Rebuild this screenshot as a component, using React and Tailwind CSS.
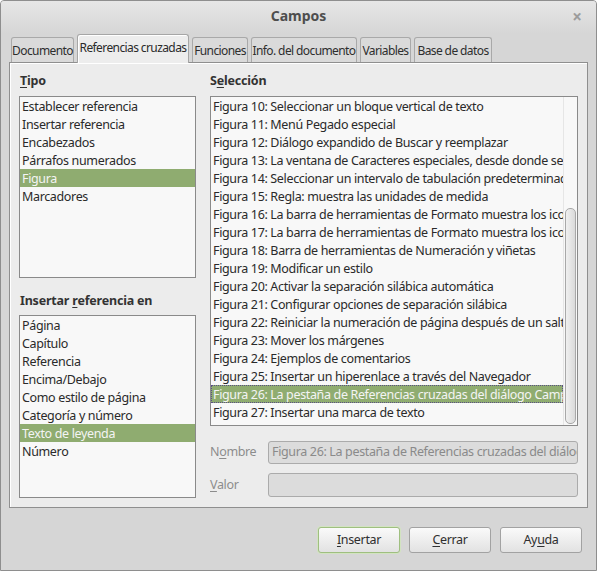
import React from 'react';

const font = { fontFamily: '"Noto Sans", "Open Sans", sans-serif' };

const tabs = [
  { label: 'Documento', w: 'w-[63px]' },
  { label: 'Referencias cruzadas', w: 'w-[112px]', active: true },
  { label: 'Funciones', w: 'w-[56px]' },
  { label: 'Info. del documento', w: 'w-[106px]' },
  { label: 'Variables', w: 'w-[51px]' },
  { label: 'Base de datos', w: 'w-[78px]' },
];

const tipos = [
  'Establecer referencia',
  'Insertar referencia',
  'Encabezados',
  'Párrafos numerados',
  'Figura',
  'Marcadores',
];

const insertarEn = [
  'Página',
  'Capítulo',
  'Referencia',
  'Encima/Debajo',
  'Como estilo de página',
  'Categoría y número',
  'Texto de leyenda',
  'Número',
];

const figuras = [
  'Figura 10: Seleccionar un bloque vertical de texto',
  'Figura 11: Menú Pegado especial',
  'Figura 12: Diálogo expandido de Buscar y reemplazar',
  'Figura 13: La ventana de Caracteres especiales, desde donde se pueden insertar',
  'Figura 14: Seleccionar un intervalo de tabulación predeterminado',
  'Figura 15: Regla: muestra las unidades de medida',
  'Figura 16: La barra de herramientas de Formato muestra los iconos',
  'Figura 17: La barra de herramientas de Formato muestra los iconos',
  'Figura 18: Barra de herramientas de Numeración y viñetas',
  'Figura 19: Modificar un estilo',
  'Figura 20: Activar la separación silábica automática',
  'Figura 21: Configurar opciones de separación silábica',
  'Figura 22: Reiniciar la numeración de página después de un salto',
  'Figura 23: Mover los márgenes',
  'Figura 24: Ejemplos de comentarios',
  'Figura 25: Insertar un hiperenlace a través del Navegador',
  'Figura 26: La pestaña de Referencias cruzadas del diálogo Campos',
  'Figura 27: Insertar una marca de texto',
];

const ListRow = ({ text, selected, focused }) => (
  <div
    className={
      'h-[18px] leading-[16px] pt-[1px] pl-[1px] whitespace-nowrap border ' +
      (selected ? 'bg-[#8fac70] text-[#f4f4f4] ' : 'text-[#2a2a2a] ') +
      (focused ? 'border-dotted border-[#5a4f86]' : 'border-transparent')
    }
  >
    {text}
  </div>
);

const Button = ({ children, primary }) => (
  <button
    className={
      'w-[82px] h-[26px] rounded-[3px] border bg-gradient-to-b from-[#fafafa] to-[#e2e2e2] text-[#2f2f2f] text-[12.5px] tracking-[-0.35px] ' +
      (primary ? 'border-[#9fbf80] shadow-[0_0_0_1px_#d2e3c1]' : 'border-[#a2a2a2]')
    }
    style={font}
  >
    {children}
  </button>
);

export default function App() {
  return (
    <div
      className="w-[597px] h-[571px] bg-[#d6d6d6] border border-[#8e8e8e] rounded-t-[4px] flex flex-col overflow-hidden text-[12.5px] tracking-[-0.35px]"
      style={font}
    >
      {/* Title bar */}
      <div className="bg-gradient-to-b from-[#e6e6e6] to-[#d6d6d6]">
        <div className="h-[33px] flex items-center justify-center relative">
          <span className="text-[14px] font-bold text-[#4e4e4e] tracking-normal -mt-[5px]">Campos</span>
          <span className="absolute right-[14px] top-[3px] text-[#9c9c9c] text-[17px] font-bold tracking-normal">×</span>
        </div>
      </div>

      {/* Tabs */}
      <div className="flex items-end gap-[3px] pl-[10px] h-[29px] -mb-px relative z-10 text-[12px] tracking-[-0.6px]">
        {tabs.map((t) =>
          t.active ? (
            <div
              key={t.label}
              className={t.w + ' shrink-0 h-[29px] bg-[#ededed] border border-b-0 border-[#a6a6a6] rounded-t-[3px] flex items-center justify-center whitespace-nowrap text-[#2a2a2a] pb-[2px] shadow-[inset_1px_1px_0_#ffffff]'}
            >
              {t.label}
            </div>
          ) : (
            <div
              key={t.label}
              className={t.w + ' shrink-0 h-[25px] mb-px bg-[#dadada] border border-b-0 border-[#a9a9a9] rounded-t-[3px] flex items-center justify-center whitespace-nowrap text-[#2e2e2e] pt-[1px]'}
            >
              {t.label}
            </div>
          )
        )}
      </div>

      {/* Panel */}
      <div className="ml-[8px] w-[579px] h-[446px] bg-[#ececec] border border-[#8f8f8f] shadow-[inset_1px_1px_0_#ffffff] flex gap-[14px] pl-[9px] pt-[9px]">
        {/* Left column */}
        <div className="w-[177px] flex flex-col">
          <div className="h-[18px] leading-[18px] font-bold text-[#333] pl-[1px] tracking-[-0.2px]">
            <u className="underline-offset-2">T</u>ipo
          </div>
          <div className="mt-[6px] h-[182px] bg-[#f8f8f8] border border-[#8a8a8a] overflow-hidden">
            {tipos.map((t, i) => (
              <ListRow key={t} text={t} selected={i === 4} />
            ))}
          </div>
          <div className="mt-[14px] h-[18px] leading-[18px] font-bold text-[#333] pl-[1px] tracking-[-0.2px]">
            Insertar <u className="underline-offset-2">r</u>eferencia en
          </div>
          <div className="mt-[5px] h-[183px] bg-[#f8f8f8] border border-[#8a8a8a] overflow-hidden">
            {insertarEn.map((t, i) => (
              <ListRow key={t} text={t} selected={i === 6} />
            ))}
          </div>
        </div>

        {/* Right column */}
        <div className="w-[368px] flex flex-col">
          <div className="h-[18px] leading-[18px] font-bold text-[#333] tracking-[-0.2px]">
            S<u className="underline-offset-2">e</u>lección
          </div>
          <div className="mt-[6px] h-[330px] bg-[#f8f8f8] border border-[#8a8a8a] flex">
            <div className="flex-1 min-w-0 overflow-hidden">
              {figuras.map((t, i) => (
                <ListRow key={t} text={t} selected={i === 16} focused={i === 16} />
              ))}
            </div>
            <div className="w-[14px] flex flex-col justify-end items-center pb-[1px] border-l border-[#e6e6e6]">
              <div className="w-[11px] h-[216px] rounded-[5px] border border-[#a8a8a8] bg-gradient-to-r from-[#f0f0f0] to-[#dadada]" />
            </div>
          </div>

          <div className="mt-[15px] flex items-center">
            <span className="w-[58px] text-[#8c8c8c]">
              N<u className="underline-offset-2">o</u>mbre
            </span>
            <div className="flex-1 h-[23px] rounded-[3px] border border-[#ababab] bg-[#dcdcdc] flex items-center pl-[3px] text-[#8a8a8a] whitespace-nowrap overflow-hidden">
              Figura 26: La pestaña de Referencias cruzadas del diálogo Campos
            </div>
          </div>
          <div className="mt-[9px] flex items-center">
            <span className="w-[58px] text-[#8c8c8c]">
              <u className="underline-offset-2">V</u>alor
            </span>
            <div className="flex-1 h-[24px] rounded-[3px] border border-[#ababab] bg-[#dcdcdc]" />
          </div>
        </div>
      </div>

      {/* Buttons */}
      <div className="flex justify-end gap-[9px] pr-[14px] mt-[19px]">
        <Button primary>
          <u className="underline-offset-2">I</u>nsertar
        </Button>
        <Button>
          <u className="underline-offset-2">C</u>errar
        </Button>
        <Button>
          Ay<u className="underline-offset-2">u</u>da
        </Button>
      </div>
    </div>
  );
}
